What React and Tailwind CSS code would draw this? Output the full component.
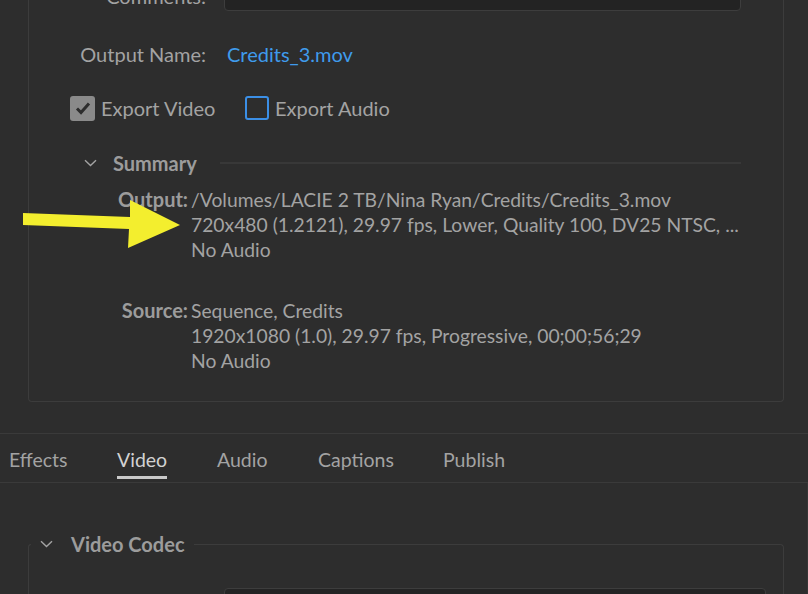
import React from "react";

const Chevron = ({ className }) => (
  <svg className={className} width="13" height="8" viewBox="0 0 13 8" fill="none">
    <path d="M1 1.2 L6.5 6.5 L12 1.2" stroke="#a3a3a3" strokeWidth="1.4" />
  </svg>
);

const Row = ({ label, lines }) => (
  <div className="flex">
    <div className="w-[159px] text-right font-bold text-[#9c9c9c] leading-[25px]">{label}</div>
    <div className="ml-[3px] flex flex-col leading-[25px] text-[19.3px] text-[#a3a3a3]">
      {lines.map((l, i) => (
        <div key={i} className="whitespace-nowrap">{l}</div>
      ))}
    </div>
  </div>
);

export default function App() {
  return (
    <div
      className="relative w-[808px] h-[594px] overflow-hidden bg-[#2d2d2d] text-[20px] text-[#a3a3a3]"
      style={{ fontFamily: "Lato, 'Open Sans', sans-serif" }}
    >
      {/* Top panel */}
      <div className="ml-[28px] w-[756px] -mt-[20px] h-[422px] border-l border-r border-b border-[#3c3c3c] rounded-b-[4px] pb-[27px]">
        <div className="flex items-center h-[31px]">
          <div className="w-[177px] text-right">Comments:</div>
          <div className="ml-[18px] w-[517px] h-[31px] bg-[#232323] border border-[#3d3d3d] rounded-[4px]" />
        </div>
        <div className="flex items-center h-[26px] mt-[30px]">
          <div className="w-[177px] text-right">Output Name:</div>
          <div className="ml-[21px] text-[#3f9bec]">Credits_3.mov</div>
        </div>
        <div className="flex items-center h-[26px] mt-[28px] pl-[41px]">
          <div className="w-[25px] h-[25px] rounded-[3px] bg-[#8a8a8a] flex items-center justify-center">
            <svg width="16" height="14" viewBox="0 0 16 14">
              <path d="M2 7.5 L6 11.5 L14 2.5" stroke="#2d2d2d" strokeWidth="3" fill="none" />
            </svg>
          </div>
          <div className="ml-[6px] w-[113px] whitespace-nowrap">Export Video</div>
          <div className="ml-[31px] w-[24px] h-[24px] rounded-[3px] border-[2.5px] border-[#3b8fe6]" />
          <div className="ml-[6px] whitespace-nowrap">Export Audio</div>
        </div>
        <div className="flex items-center h-[26px] mt-[29px]">
          <Chevron className="ml-[55px]" />
          <div className="ml-[16px] w-[107px] font-bold text-[#9c9c9c]">Summary</div>
          <div className="w-[521px] h-[2px] bg-[#383838]" />
        </div>
        <div className="mt-[11px]">
          <Row
            label="Output:"
            lines={[
              "/Volumes/LACIE 2 TB/Nina Ryan/Credits/Credits_3.mov",
              "720x480 (1.2121), 29.97 fps, Lower, Quality 100, DV25 NTSC, ...",
              "No Audio",
            ]}
          />
        </div>
        <div className="mt-[36px]">
          <Row
            label="Source:"
            lines={[
              "Sequence, Credits",
              "1920x1080 (1.0), 29.97 fps, Progressive, 00;00;56;29",
              "No Audio",
            ]}
          />
        </div>
      </div>

      {/* Tabs */}
      <div className="mt-[31px] border-t border-b border-[#3a3a3a] h-[50px] flex items-end text-[19.5px]">
        <div className="flex h-[48px] items-center">
          <div className="ml-[9px] w-[57px] h-full flex items-center pt-[3px]">Effects</div>
          <div className="ml-[51px] w-[50px] h-full flex flex-col justify-center relative text-[#d2d2d2] pt-[3px]">
            <span>Video</span>
            <div className="absolute left-0 right-0 bottom-[3px] h-[3px] bg-[#c9c9c9]" />
          </div>
          <div className="ml-[50px] w-[51px] h-full flex items-center pt-[3px]">Audio</div>
          <div className="ml-[50px] w-[75px] h-full flex items-center pt-[3px]">Captions</div>
          <div className="ml-[50px] h-full flex items-center pt-[3px]">Publish</div>
        </div>
      </div>

      {/* Video Codec panel */}
      <div className="mt-[49px] ml-[28px] w-[756px]">
        <div className="flex items-center h-[24px]">
          <div className="w-[3px] h-[12px] self-end border-l border-t border-[#3c3c3c] rounded-tl-[4px]" />
          <Chevron className="ml-[9px]" />
          <div className="ml-[18px] font-bold text-[#9c9c9c]">Video Codec</div>
          <div className="ml-[9px] flex-1 h-[12px] self-end border-t border-r border-[#3c3c3c] rounded-tr-[4px]" />
        </div>
        <div className="h-[60px] border-l border-r border-[#3c3c3c] pt-[32px]">
          <div className="ml-[195px] w-[542px] h-[40px] bg-[#242424] border border-[#3d3d3d] rounded-[4px]" />
        </div>
      </div>
      <div className="absolute right-0 top-[483px] bottom-0 w-px bg-[#353535]" />

      {/* Yellow arrow annotation */}
      <svg className="absolute left-0 top-0" width="200" height="260" viewBox="0 0 200 260">
        <polygon
          points="23,213 130,217 130,200 180,225 128,248 129,229 23,225"
          fill="#f3ee2e"
        />
      </svg>
    </div>
  );
}
